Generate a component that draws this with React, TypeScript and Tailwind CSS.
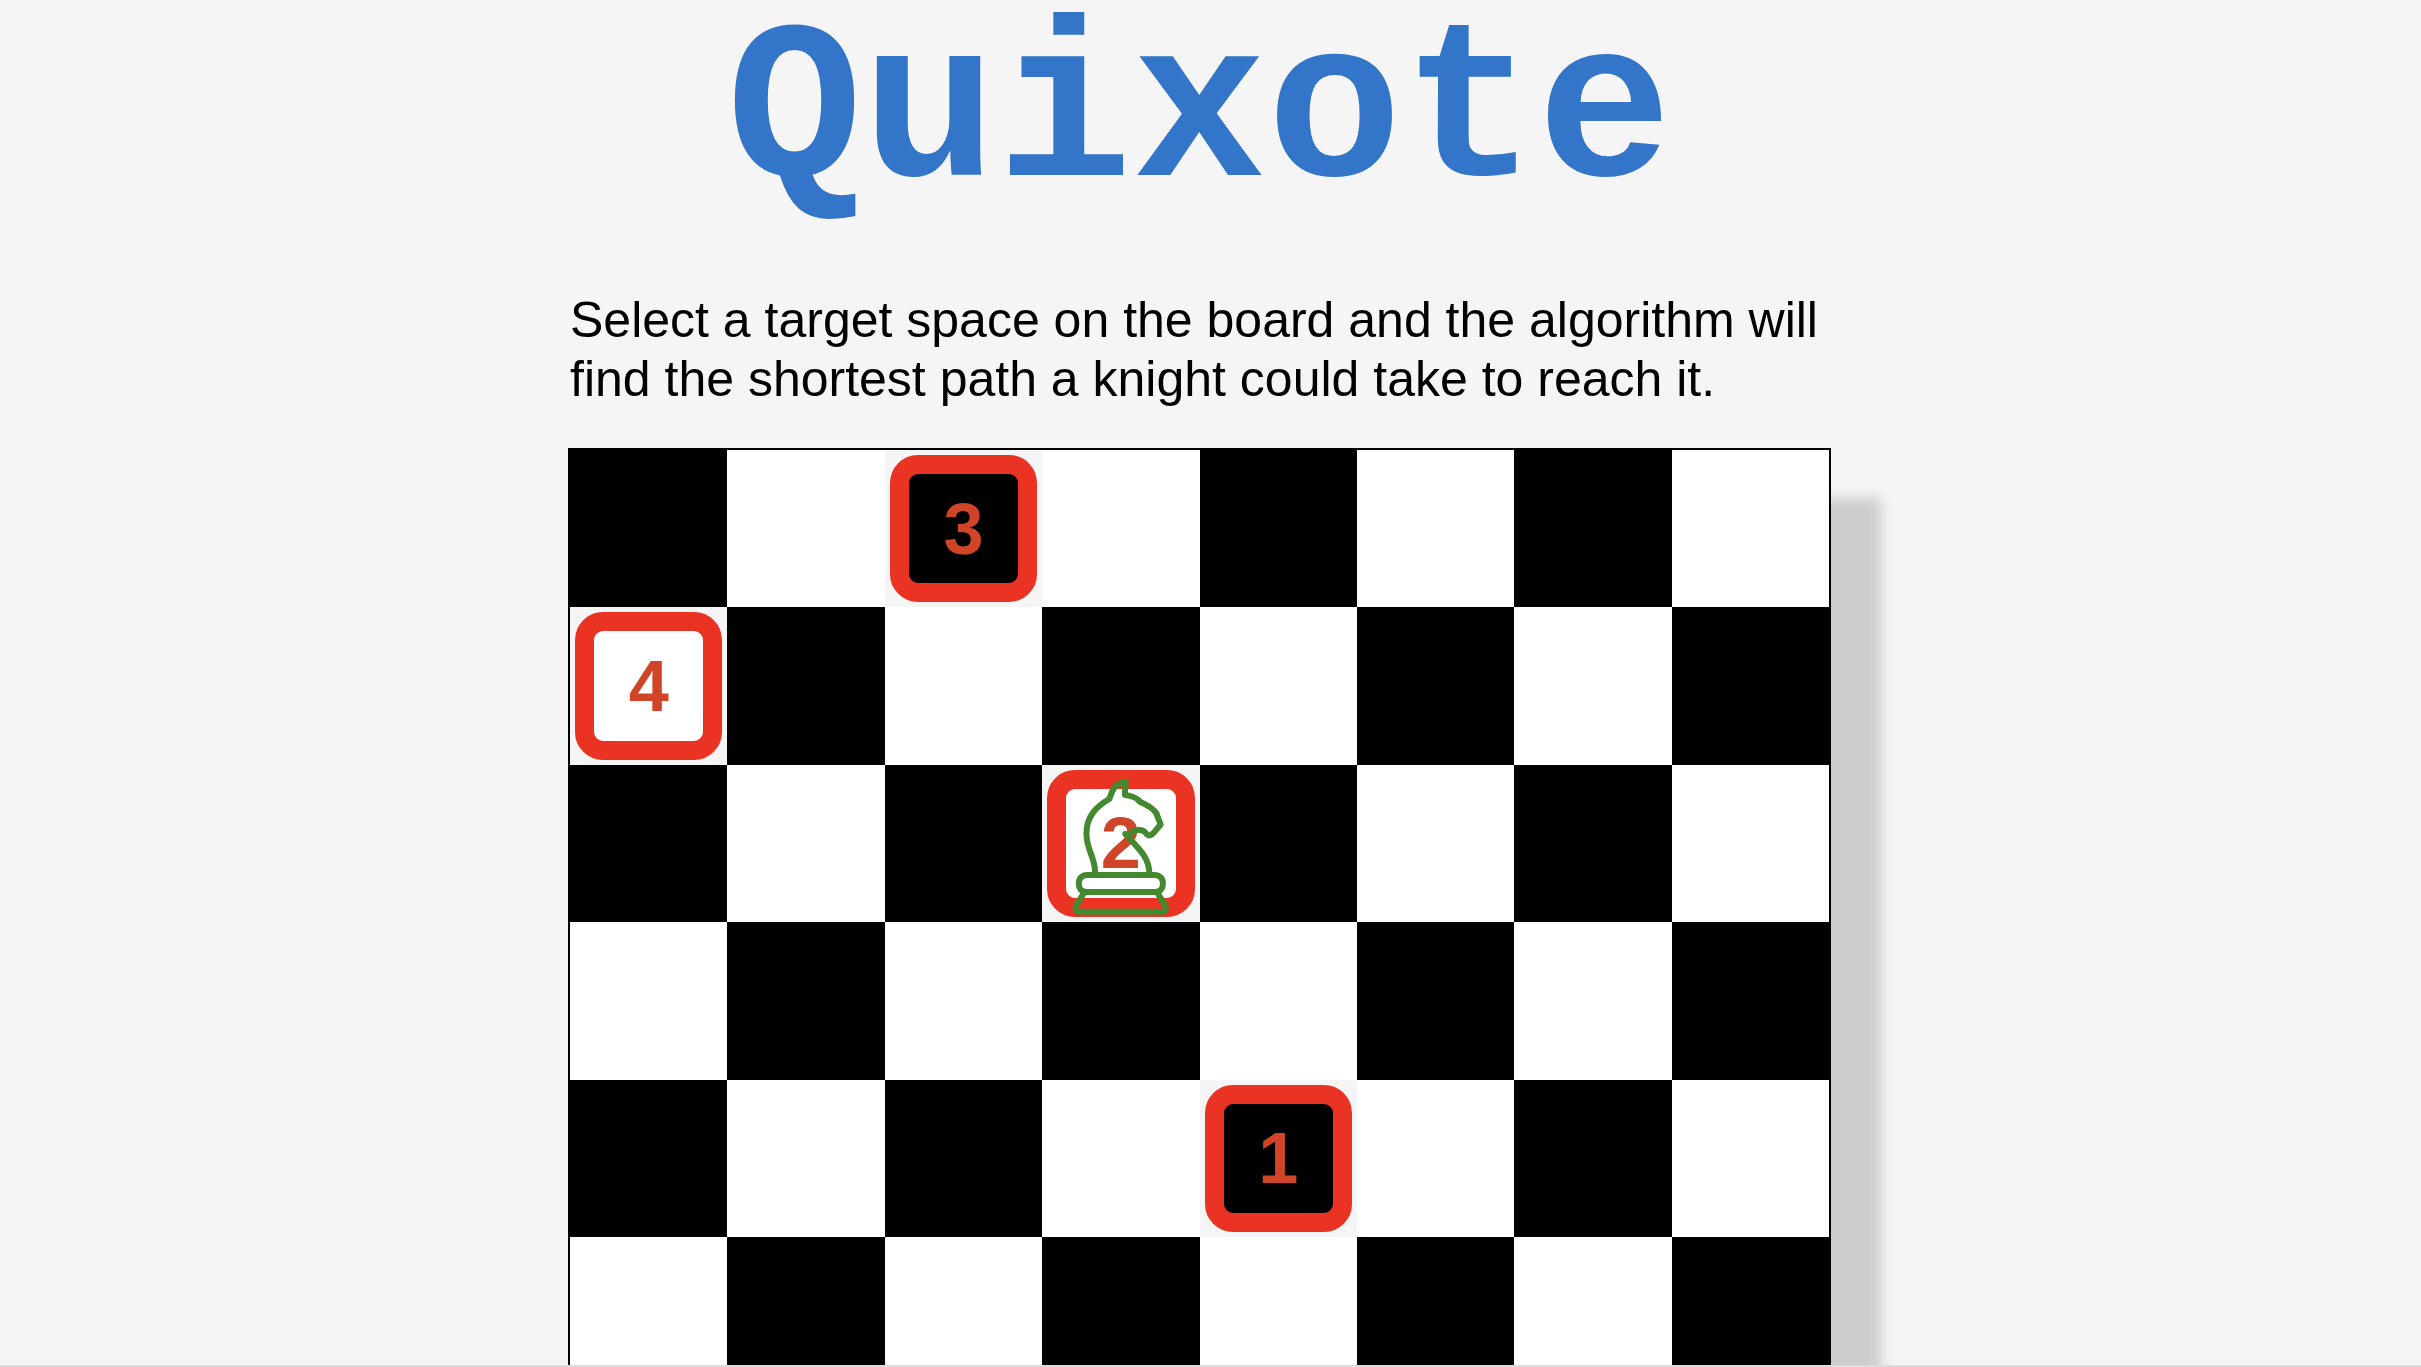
type Position = { row: number; col: number };

const SIZE = 8;

const path: (Position & { step: number })[] = [
  { row: 4, col: 4, step: 1 },
  { row: 2, col: 3, step: 2 },
  { row: 0, col: 2, step: 3 },
  { row: 1, col: 0, step: 4 },
];

const knight: Position = { row: 2, col: 3 };

function KnightIcon() {
  return (
    <svg
      aria-hidden="true"
      viewBox="36 45 471 471"
      className="pointer-events-none absolute inset-0 size-full"
      fill="none"
      stroke="#43892f"
      strokeWidth="18"
      strokeLinecap="round"
      strokeLinejoin="round"
    >
      <path d="M195 367 C195 320 169 300 169 250 C169 196 201 168 238 146 L246 124 C254 108 270 96 286 94 L284 134 C300 138 317 138 329 155 C349 164 371 177 378 189 L391 223 L372 246 C361 259 353 258 346 248 C336 235 322 239 310 243 C302 252 294 256 285 251 C316 287 356 316 357 367" />
      <path d="M172 374 H372 C389 374 398 385 398 400 C398 415 389 425 376 425 H168 C155 425 146 415 146 400 C146 385 155 374 172 374 Z" />
      <path d="M163 425 L138 466 Q133 483 145 484 H398 Q410 483 405 466 L380 425" />
    </svg>
  );
}

function Square({ row, col }: Position) {
  const dark = (row + col) % 2 === 0;
  const step = path.find((p) => p.row === row && p.col === col)?.step;
  const hasKnight = knight.row === row && knight.col === col;
  const fill = dark ? "bg-black" : "bg-white";
  const label = `Row ${row + 1}, column ${col + 1}`;

  if (step === undefined) {
    return <button type="button" aria-label={label} className={`aspect-square ${fill}`} />;
  }

  return (
    <button type="button" aria-label={`${label}, move ${step}`} className="relative aspect-square bg-[#f5f5f5] p-[5px]">
      <span
        className={`flex size-full items-center justify-center rounded-[28px] border-[19px] border-[#eb3324] text-[72px] leading-none font-bold text-[#d04427] ${fill}`}
      >
        {step}
      </span>
      {hasKnight && <KnightIcon />}
    </button>
  );
}

export default function App() {
  return (
    <div className="h-screen overflow-hidden border-b-2 border-[#dcdcde] bg-[#f5f5f5] pr-[22px] font-['Liberation_Sans',Arial,sans-serif] text-black">
      <main className="mx-auto w-full max-w-[1263px]">
        <h1 className="mb-[59px] text-center font-['Courier_New','Liberation_Mono',monospace] text-[225px] leading-[232px] font-bold text-[#3375c8]">
          Quixote
        </h1>
        <p className="mb-[39px] pl-[2px] text-[50px] leading-[59px]">
          Select a target space on the board and the algorithm will find the shortest path a knight could take to reach it.
        </p>
        <div className="grid grid-cols-8 border-2 border-black shadow-[50px_50px_12px_#cdcdcd]">
          {Array.from({ length: SIZE * SIZE }, (_, i) => (
            <Square key={i} row={Math.floor(i / SIZE)} col={i % SIZE} />
          ))}
        </div>
      </main>
    </div>
  );
}
